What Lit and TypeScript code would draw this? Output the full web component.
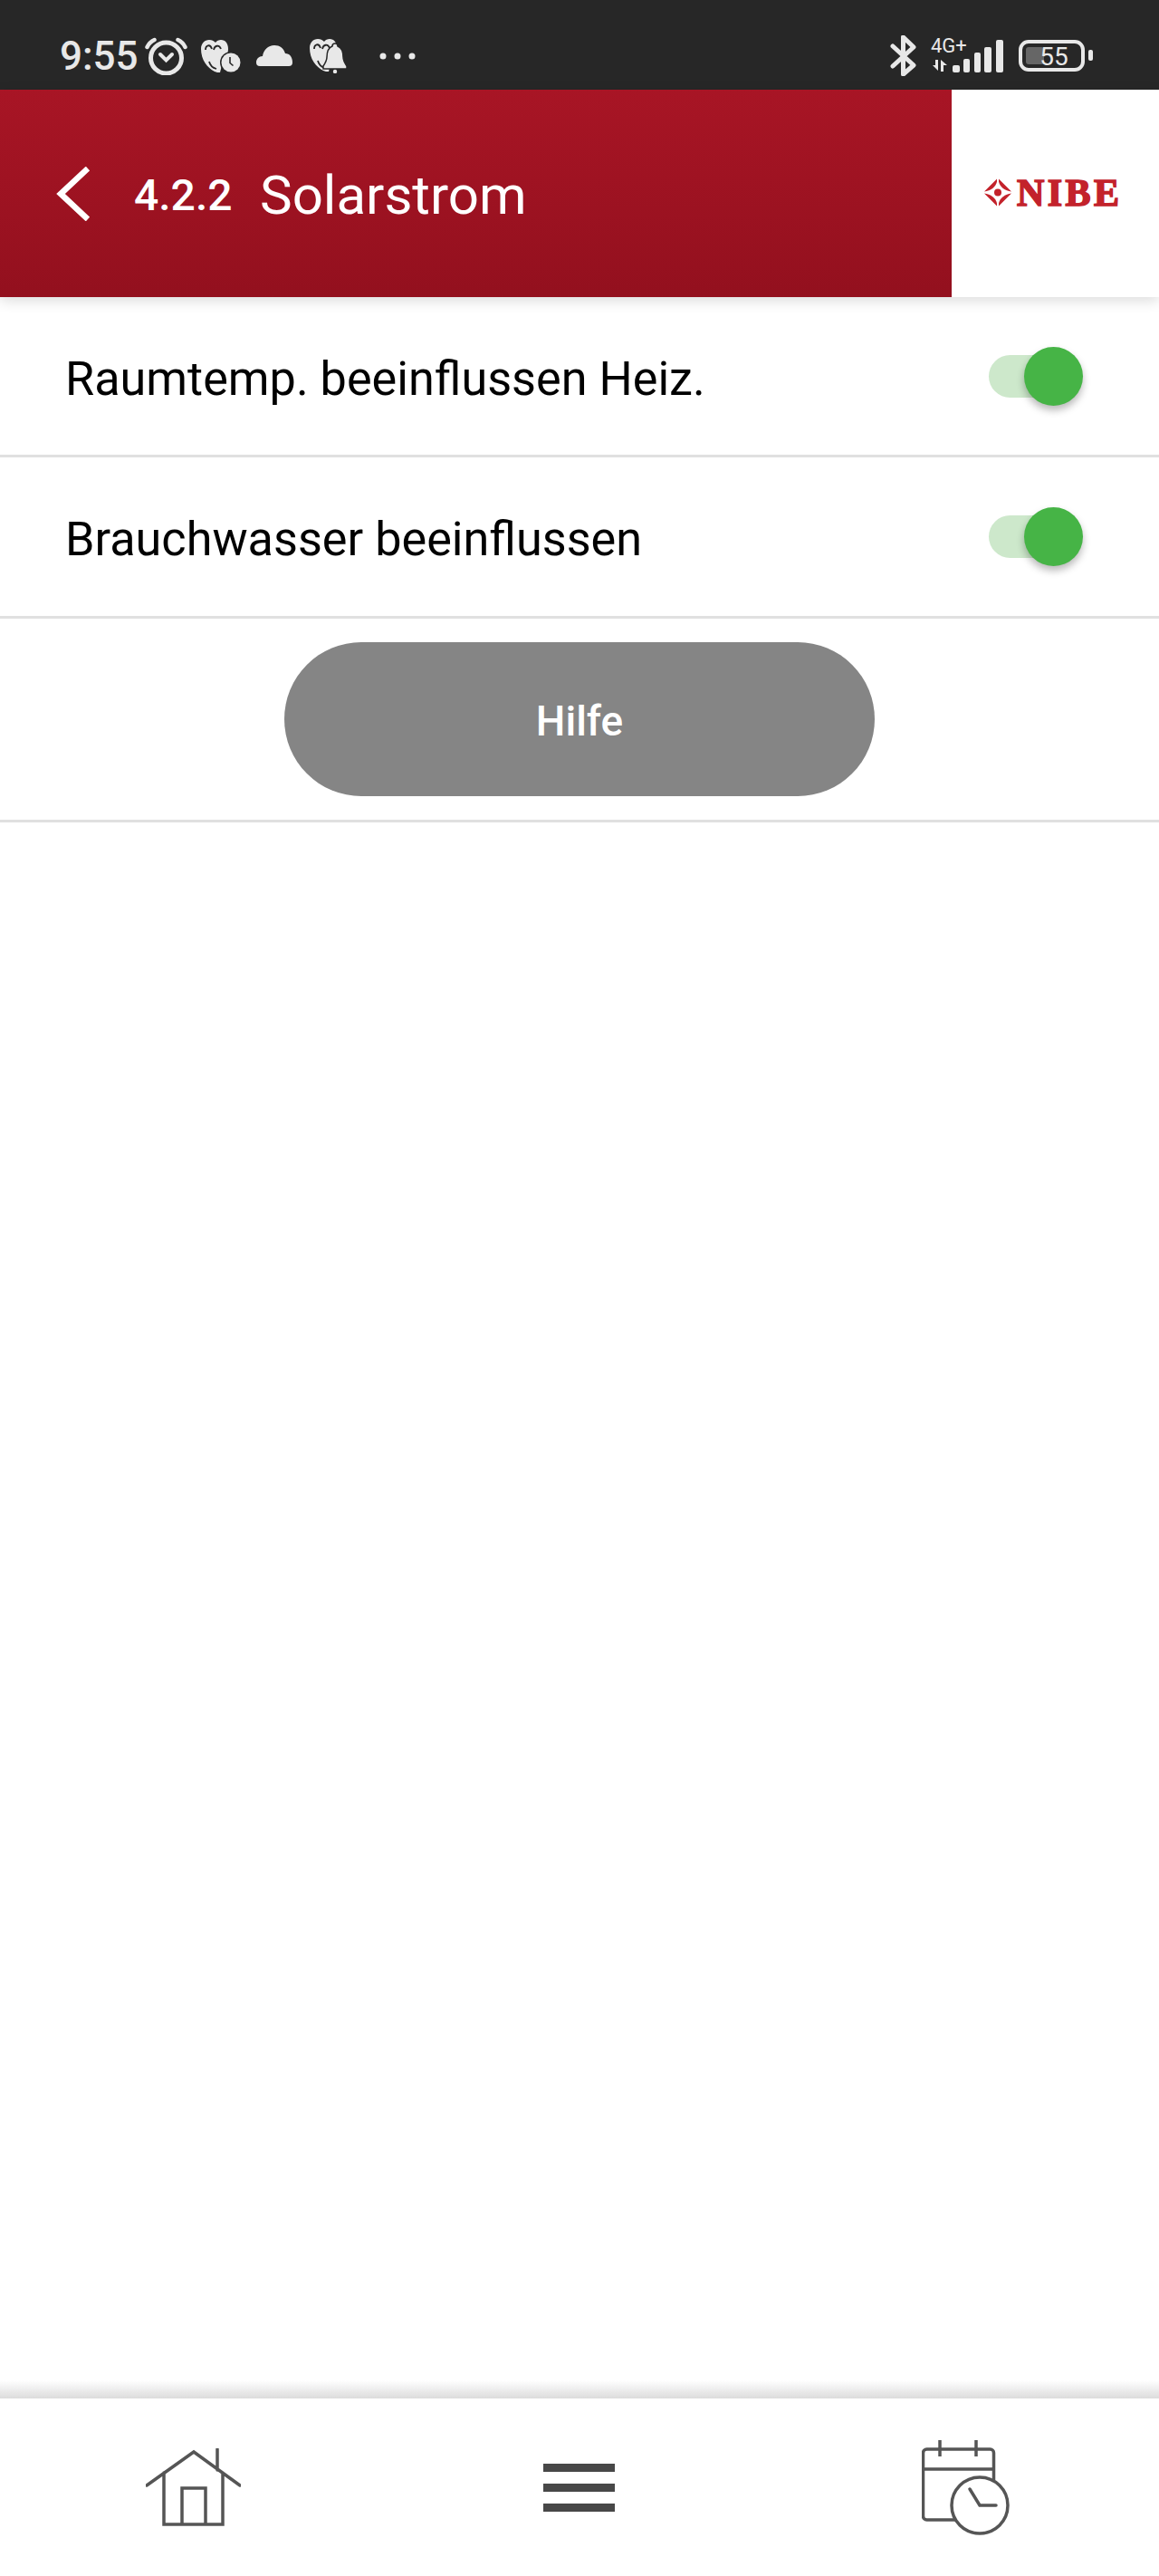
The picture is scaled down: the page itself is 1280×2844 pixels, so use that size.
import { LitElement, html, css, svg } from "lit";
import { customElement } from "lit/decorators.js";

const heart = svg`
  <path fill="#e8e8e8" d="M0 10C0 4 4 0 9 0c3 0 5 1 7 3 1-2 4-3 6-3 5 0 8 4 8 10 0 6-3 10-6 14l-3 12c-2 0-4 0-6-1C7 31 0 22 0 10Z"/>
  <path fill="none" stroke="#272727" stroke-width="1.8" d="M5 11c0-5 5-7 7-1M14 11c1-5 6-6 8-1M9 24c1 4 4 7 8 8"/>`;

@customElement("app-root")
export class AppRoot extends LitElement {
  static styles = css`
    :host {
      display: flex;
      flex-direction: column;
      height: 100vh;
      background: #fff;
      color: #000;
      font-family: Roboto, "Liberation Sans", sans-serif;
      overflow: hidden;
    }
    svg {
      display: block;
      flex: none;
    }

    .status {
      height: 99px;
      flex: none;
      box-sizing: border-box;
      padding: 24px 73px 0 66px;
      display: flex;
      align-items: center;
      background: #272727;
      color: #e8e8e8;
    }
    .time {
      font-size: 44px;
      font-weight: 500;
      line-height: 1;
      width: 84px;
      white-space: nowrap;
    }
    .alarm { margin-left: 10px; }
    .msg { margin-left: 15px; }
    .cloud { margin-left: 17px; }
    .bell { margin-left: 19px; }
    .dots { margin-left: 35px; }
    .status-right {
      margin-left: auto;
      display: flex;
      align-items: center;
    }
    .net {
      margin: 0 0 3px 16px;
    }
    .battery { margin-left: 17px; }
    .net text,
    .battery text {
      font-family: Roboto, "Liberation Sans", sans-serif;
      fill: #e8e8e8;
    }

    .header {
      height: 229px;
      flex: none;
      display: flex;
      position: relative;
      z-index: 1;
      box-shadow: 0 4px 14px rgba(0, 0, 0, 0.14);
    }
    .bar {
      flex: 1;
      display: flex;
      align-items: center;
      padding-left: 62px;
      color: #fff;
      background: linear-gradient(#a81525, #93101e);
    }
    .num {
      margin-left: 49px;
      font-size: 48px;
      font-weight: 500;
      width: 139px;
      padding-top: 3px;
    }
    .name {
      font-size: 60px;
      padding-top: 4px;
      white-space: nowrap;
    }
    .logo {
      width: 229px;
      flex: none;
      box-sizing: border-box;
      background: #fff;
      display: flex;
      align-items: center;
      padding: 0 0 2px 36px;
      color: #c3222b;
    }
    .logo span {
      margin-left: 6px;
      font-family: "Liberation Serif", serif;
      font-weight: 700;
      font-size: 42px;
      line-height: 1;
      letter-spacing: 3.4px;
      -webkit-text-stroke: 1.6px #c3222b;
    }

    main {
      flex: 1;
    }
    .row {
      height: 178px;
      box-sizing: border-box;
      border-bottom: 3px solid #e0e0e0;
      display: flex;
      align-items: center;
      justify-content: space-between;
      padding: 0 84px 0 72px;
    }
    .row:first-child {
      height: 177px;
    }
    .label {
      font-size: 52.2px;
      padding-top: 6px;
      white-space: nowrap;
    }
    .toggle {
      width: 104px;
      height: 65px;
      position: relative;
    }
    .track {
      position: absolute;
      left: 0;
      right: 17px;
      top: 9px;
      height: 47px;
      border-radius: 24px;
      background: #cde8cb;
    }
    .thumb {
      position: absolute;
      right: 0;
      top: 0;
      width: 65px;
      height: 65px;
      border-radius: 50%;
      background: #46b446;
      box-shadow: 0 5px 8px rgba(0, 0, 0, 0.28);
    }
    .help-row {
      height: 225px;
      box-sizing: border-box;
      border-bottom: 3px solid #e0e0e0;
      display: flex;
      align-items: center;
      justify-content: center;
    }
    .help {
      width: 652px;
      height: 170px;
      box-sizing: border-box;
      padding-top: 3px;
      border-radius: 85px;
      background: #858585;
      color: #fff;
      font-size: 46px;
      font-weight: 500;
      display: flex;
      align-items: center;
      justify-content: center;
    }

    footer {
      height: 196px;
      flex: none;
      position: relative;
      display: grid;
      grid-template-columns: repeat(3, 1fr);
      align-items: center;
      justify-items: center;
      background: #fff;
    }
    footer::before {
      content: "";
      position: absolute;
      left: 0;
      right: 0;
      top: -20px;
      height: 20px;
      background: linear-gradient(rgba(215, 215, 215, 0), #dcdcdc);
    }
    .menu {
      width: 79px;
      display: flex;
      flex-direction: column;
      gap: 13px;
    }
    .menu i {
      display: block;
      height: 9px;
      background: #484848;
    }
  `;

  private toggle() {
    return html`<div class="toggle"><div class="track"></div><div class="thumb"></div></div>`;
  }

  render() {
    return html`
      <div class="status">
        <span class="time">9:55</span>
        <svg class="alarm" width="47" height="42" viewBox="0 0 47 42" fill="none" stroke="#e8e8e8">
          <circle cx="23.5" cy="23" r="17" stroke-width="5"/>
          <path stroke-width="4" stroke-linecap="round" d="M17 19l6.500 6.500L30 19"/>
          <path stroke-width="4.500" stroke-linecap="round" d="M2.500 11c2-4 4.500-6.500 8-8M44.500 11c-2-4-4.500-6.500-8-8"/>
        </svg>
        <svg class="msg" width="44" height="36" viewBox="0 0 44 36">
          ${heart}
          <circle cx="33" cy="25" r="12" fill="#272727"/>
          <circle cx="33" cy="25" r="10.500" fill="#e8e8e8"/>
          <path fill="none" stroke="#272727" stroke-width="1.600" d="M32 19v6.500l3.500 3"/>
        </svg>
        <svg class="cloud" width="40" height="23" viewBox="0 0 40 23">
          <path fill="#e8e8e8" d="M4 23a4 4 0 0 1-4-4c0-4 3-7 7-7 1-7 6-12 13-12 6 0 10 3 12 9 5 0 8 4 8 10a4 4 0 0 1-4 4Z"/>
        </svg>
        <svg class="bell" width="42" height="38" viewBox="0 0 42 38">
          ${heart}
          <path fill="#e8e8e8" stroke="#272727" stroke-width="1.500" d="M28 5c2 0 3 1 3 3 5 2 6 7 6 12 0 4 2 7 4 10v3H15v-3c2-3 4-6 4-10 0-5 1-10 6-12 0-2 1-3 3-3Z"/>
          <circle cx="28" cy="36" r="2.200" fill="#e8e8e8"/>
        </svg>
        <svg class="dots" width="40" height="8" viewBox="0 0 40 8" fill="#e8e8e8">
          <circle cx="4" cy="4" r="3.500"/><circle cx="20" cy="4" r="3.500"/><circle cx="36" cy="4" r="3.500"/>
        </svg>
        <div class="status-right">
          <svg width="29" height="45" viewBox="0 0 29 45" fill="none" stroke="#e8e8e8" stroke-width="5" stroke-linejoin="round" stroke-linecap="round">
            <path d="M3 12l23 21-11.500 10V2L26 13 3 34"/>
          </svg>
          <svg class="net" width="80" height="42" viewBox="0 -4 80 42" fill="#e8e8e8">
            <text x="0" y="15" font-size="22">4G+</text>
            <path d="M8 23v12l-6-6h3v-6ZM11 36V23l7 6h-4v7Z"/>
            <rect x="24" y="29" width="8" height="8" rx="2"/>
            <rect x="36" y="22" width="7" height="15" rx="2"/>
            <rect x="48" y="15" width="7" height="22" rx="2"/>
            <rect x="59" y="9" width="8" height="28" rx="2"/>
            <rect x="72" y="1" width="8" height="36" rx="2"/>
          </svg>
          <svg class="battery" width="82" height="35" viewBox="0 0 82 35">
            <rect x="2" y="2" width="69" height="31" rx="9" fill="none" stroke="#e8e8e8" stroke-width="4"/>
            <rect x="8" y="8" width="20" height="19" rx="3" fill="#666"/>
            <text x="39" y="28" font-size="28" text-anchor="middle">55</text>
            <rect x="77" y="11" width="5" height="12" rx="2" fill="#e8e8e8"/>
          </svg>
        </div>
      </div>

      <header class="header">
        <div class="bar">
          <svg width="37" height="60" viewBox="0 0 37 60" fill="none" stroke="#fff" stroke-width="6.500">
            <path d="M35 2L5 30l30 28"/>
          </svg>
          <span class="num">4.2.2</span>
          <span class="name">Solarstrom</span>
        </div>
        <div class="logo">
          <svg width="30" height="31" viewBox="0 0 30 31" fill="#c3222b">
            <circle cx="15" cy="15.500" r="4"/>
            <path d="M0 14.500L14 .5v3C13 9 7 14 0 14.500Z"/>
            <path d="M30 14.500L16 .5v3C17 9 23 14 30 14.500Z"/>
            <path d="M0 16.500l14 14v-3C13 22 7 17 0 16.500Z"/>
            <path d="M30 16.500l-14 14v-3C17 22 23 17 30 16.500Z"/>
          </svg>
          <span>NIBE</span>
        </div>
      </header>

      <main>
        <div class="row"><span class="label">Raumtemp. beeinflussen Heiz.</span>${this.toggle()}</div>
        <div class="row"><span class="label">Brauchwasser beeinflussen</span>${this.toggle()}</div>
        <div class="help-row"><div class="help">Hilfe</div></div>
      </main>

      <footer>
        <svg width="105" height="86" viewBox="0 0 105 86" fill="none" stroke="#555" stroke-width="3.500" stroke-linecap="round">
          <path d="M1 41L53 4l51 37M20 27v57h65V27M40 84V44h26v40M79 1v23"/>
        </svg>
        <div class="menu"><i></i><i></i><i></i></div>
        <svg width="98" height="105" viewBox="0 0 98 105" fill="none" stroke="#555" stroke-width="3.500">
          <path d="M20 0v18M60 0v18M1 32h79"/>
          <rect x="1.500" y="10" width="78" height="78" rx="4"/>
          <circle cx="64" cy="72" r="31" fill="#fff"/>
          <path stroke-linecap="round" d="M53 54l11 18h18"/>
        </svg>
      </footer>
    `;
  }
}
